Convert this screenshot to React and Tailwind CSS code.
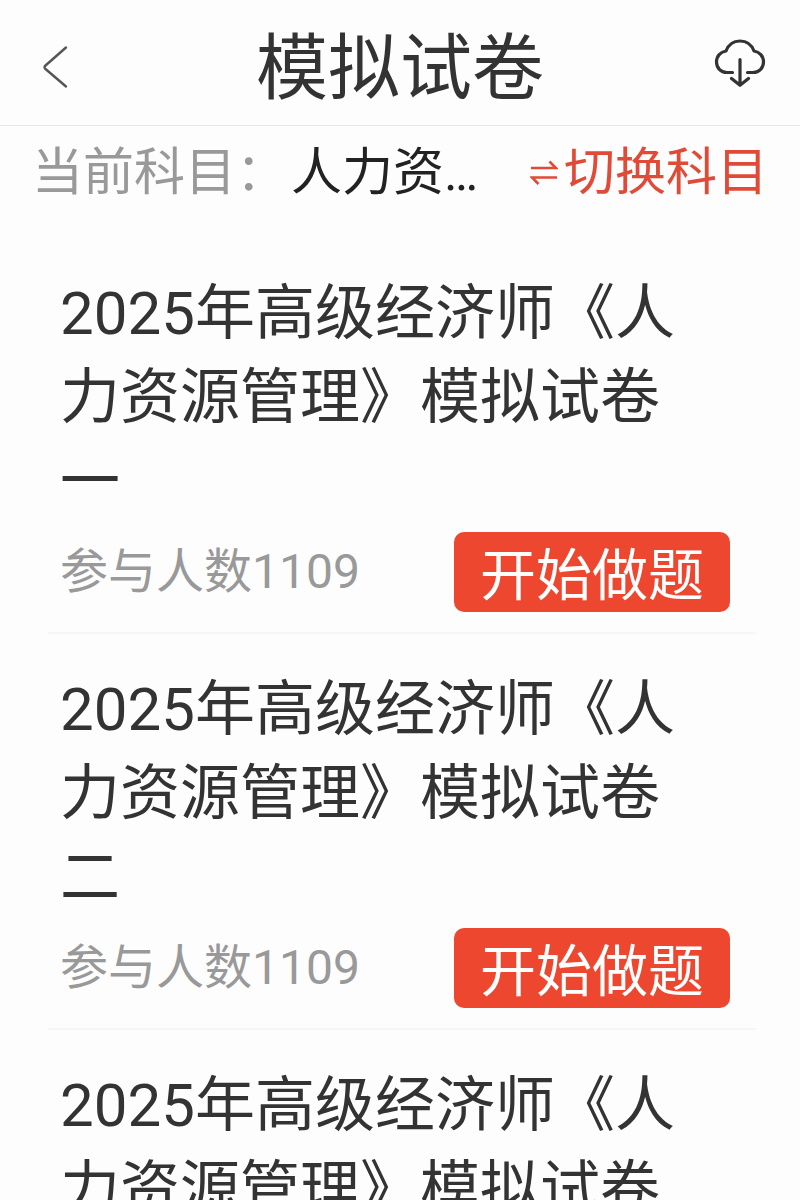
import React from "react";

const exams = [
  { id: 1, title: "2025年高级经济师《人力资源管理》模拟试卷一", count: 1109 },
  { id: 2, title: "2025年高级经济师《人力资源管理》模拟试卷二", count: 1109 },
  { id: 3, title: "2025年高级经济师《人力资源管理》模拟试卷三", count: 1109 },
];

const BackIcon = () => (
  <svg className="w-7 h-11" viewBox="0 0 28 44" fill="none" stroke="#555" strokeWidth="2.4" strokeLinecap="round" strokeLinejoin="round">
    <path d="M24 2.5 3.5 20.5Q1.5 22.2 3.5 24L24 41.5" />
  </svg>
);

const CloudDownloadIcon = () => (
  <svg className="w-13 h-12" viewBox="0 0 52 48" fill="none" stroke="#333" strokeWidth="3.2" strokeLinecap="round" strokeLinejoin="round">
    <path d="M18.5 33.5H13C6.5 33.5 2.5 28.5 2.5 23C2.5 17.2 6.5 12.8 12 12C14.5 5.5 20 2 26 2C32 2 37.5 5.5 40 12C45.5 12.8 49.5 17.2 49.5 23C49.5 28.5 45.5 33.5 39 33.5H33.5" />
    <path d="M26 20.5V46M17.5 39.5 26 46.3 34.5 39.5" />
  </svg>
);

const SwitchIcon = () => (
  <svg className="w-7 h-7" viewBox="0 0 28 28" fill="none" stroke="#e04a36" strokeWidth="2.6">
    <path d="M1 9H26L19.5 2.5M27 18.5H2L8.5 25" />
  </svg>
);

const ExamItem = ({ exam }) => (
  <li className="border-b-2 border-[#f6f6f6] pt-[34px] pb-5 pl-3 pr-[26px]">
    <h2 className="pr-6 text-[60px] leading-[84px] text-[#333]">{exam.title}</h2>
    <div className="mt-2 flex items-center justify-between">
      <span className="text-5xl text-[#999]">参与人数{exam.count}</span>
      <button
        type="button"
        className="flex h-20 items-center rounded-[10px] bg-[#ed4730] px-[26px] pt-2 text-[56px] leading-none text-white"
      >
        开始做题
      </button>
    </div>
  </li>
);

const App = () => {
  return (
    <div className="flex h-screen flex-col bg-[#fdfdfd] font-[Roboto,'Noto_Sans_CJK_SC',sans-serif]">
      <header className="flex h-[126px] shrink-0 items-center justify-between border-b border-[#e8e8e8] pl-[42px] pr-[34px]">
        <button type="button" aria-label="返回" className="flex w-11 pt-2">
          <BackIcon />
        </button>
        <h1 className="pt-3 text-7xl leading-none text-[#333]">模拟试卷</h1>
        <button type="button" aria-label="下载">
          <CloudDownloadIcon />
        </button>
      </header>

      <div className="flex h-[94px] shrink-0 items-center px-8 text-[51px]">
        <span className="shrink-0 text-[#999]">当前科目：</span>
        <span className="min-w-0 flex-1 truncate pl-1 pr-3 text-[#222]">人力资源管理</span>
        <button type="button" className="flex shrink-0 items-center gap-1.5 text-[#e04a36]">
          <SwitchIcon />
          切换科目
        </button>
      </div>

      <ul className="min-h-0 flex-1 overflow-y-auto pt-[18px] pl-12 pr-11 [scrollbar-width:none]">
        {exams.map((exam) => (
          <ExamItem key={exam.id} exam={exam} />
        ))}
      </ul>
    </div>
  );
};

export default App;
